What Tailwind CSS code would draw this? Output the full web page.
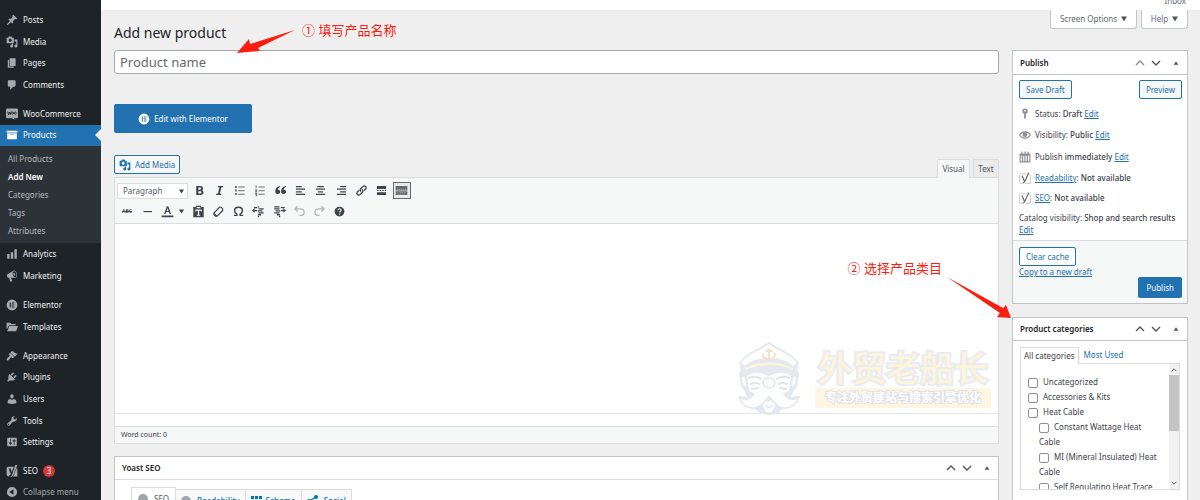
<!DOCTYPE html>
<html lang="en">
<head>
<meta charset="utf-8">
<title>Add new product</title>
<script src="https://cdn.jsdelivr.net/npm/@tailwindcss/browser@4"></script>
</head>
<body class="bg-[#efefef] text-[#3c434a] text-[8px] leading-3 font-['Noto_Sans','Noto_Sans_CJK_SC',sans-serif] overflow-hidden">
<svg class="hidden" aria-hidden="true">
  <symbol id="pin" viewBox="0 0 20 20"><path d="M10.44 3.02l1.82-1.82 6.36 6.35-1.83 1.82c-1.05-.68-2.48-.57-3.41.36l-.75.75c-.92.93-1.04 2.35-.35 3.41l-1.83 1.82-2.41-2.41-2.8 2.79c-.42.42-3.38 2.71-3.8 2.29s1.86-3.39 2.28-3.81l2.79-2.79L4.1 9.36l1.83-1.82c1.05.69 2.48.57 3.4-.36l.75-.75c.93-.92 1.05-2.35.36-3.41z"/></symbol>
  <symbol id="media" viewBox="0 0 20 20"><path fill-rule="evenodd" d="M13 11V4c0-.55-.45-1-1-1h-1.67L9 1H5L3.67 3H2c-.55 0-1 .45-1 1v7c0 .55.45 1 1 1h10c.55 0 1-.45 1-1zM7 4.5c1.38 0 2.5 1.12 2.5 2.5S8.38 9.5 7 9.5 4.5 8.38 4.5 7 5.62 4.5 7 4.5zM14 6h5v10.5c0 1.38-1.12 2.5-2.5 2.5S14 17.88 14 16.5s1.12-2.5 2.5-2.5c.17 0 .34.02.5.05V9h-3V6zm-4 8.05V13h2v3.5c0 1.38-1.12 2.5-2.5 2.5S7 17.88 7 16.5 8.12 14 9.5 14c.17 0 .34.02.5.05z"/></symbol>
  <symbol id="page" viewBox="0 0 20 20"><path d="M6 15V2h10v13H6zm-1 1h8v2H3V5h2v11z"/></symbol>
  <symbol id="comment" viewBox="0 0 20 20"><path d="M5 2h9c1.1 0 2 .9 2 2v7c0 1.1-.9 2-2 2h-2l-5 5v-5H5c-1.1 0-2-.9-2-2V4c0-1.1.9-2 2-2z"/></symbol>
  <symbol id="woo" viewBox="0 0 20 20"><path d="M2 1h16a2 2 0 0 1 2 2v12a2 2 0 0 1-2 2h-5l2 3-5-3H2a2 2 0 0 1-2-2V3a2 2 0 0 1 2-2z"/><path d="M3 6l1 5 2-4 1 4 1.500-5" fill="none" stroke="#1d2327" stroke-width="1.500"/><circle cx="11" cy="8.500" r="1.700" fill="none" stroke="#1d2327" stroke-width="1.400"/><circle cx="15.500" cy="8.500" r="1.700" fill="none" stroke="#1d2327" stroke-width="1.400"/></symbol>
  <symbol id="archive" viewBox="0 0 20 20"><path fill-rule="evenodd" d="M19 3v3H1V3h18zM2 7h16v10H2V7zm11 3V9H7v1h6z"/></symbol>
  <symbol id="bars" viewBox="0 0 20 20"><path d="M18 18V2h-4v16h4zm-6 0V7H8v11h4zm-6 0v-8H2v8h4z"/></symbol>
  <symbol id="mega" viewBox="0 0 20 20"><path fill-rule="evenodd" d="M18.15 5.94c.46 1.62.38 3.22-.02 4.48-.42 1.28-1.26 2.18-2.3 2.48-.16.06-.26.06-.4.06-.06.02-.12.02-.18.02-.06.02-.14.02-.22.02h-6.8l2.22 5.5c.02.14-.06.26-.14.34-.08.1-.24.16-.34.16H6.95c-.1 0-.26-.06-.34-.16-.08-.08-.16-.2-.14-.34l-1-5.5H4.25l-.02-.02c-.5.06-1.08-.18-1.54-.62s-.88-1.08-1.06-1.88c-.24-.8-.2-1.56-.02-2.2.18-.62.58-1.08 1.06-1.3l.02-.02 9-5.4c.1-.06.18-.1.24-.16.06-.04.14-.08.24-.12.16-.08.28-.12.5-.18 1.04-.3 2.24.1 3.22.98s1.84 2.24 2.26 3.86zm-2.58 5.98h-.02c.4-.1.74-.34 1.04-.7.58-.7.86-1.76.86-3.04 0-.64-.1-1.3-.28-1.98-.34-1.36-1.02-2.5-1.78-3.24s-1.68-1.1-2.46-.88c-.82.22-1.4.96-1.7 2-.32 1.04-.28 2.36.06 3.72.38 1.36 1 2.5 1.8 3.24.78.74 1.62 1.1 2.48.88zm-2.54-7.08c.22-.04.42-.02.62.04.38.16.76.48 1.02 1s.42 1.2.42 1.78c0 .3-.04.56-.12.8-.18.48-.44.84-.86.94-.34.1-.8-.06-1.14-.4s-.64-.86-.78-1.5c-.18-.62-.12-1.24.02-1.72s.48-.84.82-.94z"/></symbol>
  <symbol id="elementor" viewBox="0 0 20 20"><path fill-rule="evenodd" d="M10 1a9 9 0 1 0 0 18 9 9 0 0 0 0-18zM6.300 6H8v8H6.300zM9.500 6H14v1.600H9.500zM9.500 9.200H14v1.600H9.500zM9.500 12.400H14V14H9.500z"/></symbol>
  <symbol id="folder" viewBox="0 0 20 20"><path d="M1 3h6l2 2h7v2H5L2 13H1z"/><path d="M5.500 8.500H20L17 17H2z"/></symbol>
  <symbol id="brush" viewBox="0 0 20 20"><path d="M14.480 11.060L7.410 3.990l1.500-1.500c.5-.56 2.300-.47 3.510.32 1.210.8 1.430 1.280 2.910 2.100 1.180.64 2.450 1.260 4.450.85zm-.71.71L6.700 4.700 4.930 6.470c-.39.39-.39 1.020 0 1.410l1.060 1.060c.39.39.39 1.030 0 1.420-.6.6-1.430 1.110-2.210 1.690-.35.26-.7.53-1.010.84C1.430 14.230.4 16.080 1.400 17.070c.99 1 2.840-.03 4.180-1.360.31-.31.58-.66.85-1.020.57-.78 1.080-1.610 1.690-2.210.39-.39 1.020-.39 1.410 0l1.060 1.060c.39.39 1.020.39 1.410 0z"/></symbol>
  <symbol id="plug" viewBox="0 0 20 20"><path d="M13.110 4.360L9.870 7.600 8 5.730l3.240-3.240c.35-.34 1.050-.2 1.560.32.52.51.66 1.210.31 1.550zm-8 1.770l.91-1.120 9.010 9.010-1.190.84c-.71.71-2.630 1.160-3.820 1.160H6.140L4.900 17.260c-.59.59-1.540.59-2.120 0-.59-.58-.59-1.530 0-2.120l1.240-1.240v-3.880c0-1.130.4-3.190 1.090-3.890zm7.260 3.970l3.240-3.240c.34-.35 1.040-.21 1.550.31.52.51.66 1.210.31 1.550l-3.240 3.250z"/></symbol>
  <symbol id="user" viewBox="0 0 20 20"><path d="M10 9.250c-2.270 0-2.730-3.440-2.730-3.440C7 4.020 7.820 2 9.970 2c2.160 0 2.980 2.020 2.710 3.810 0 0-.41 3.440-2.680 3.440zm0 2.570L12.720 10c2.390 0 4.520 2.330 4.520 4.530v2.490s-3.650 1.130-7.240 1.130c-3.650 0-7.240-1.130-7.240-1.130v-2.490c0-2.250 1.940-4.480 4.470-4.480z"/></symbol>
  <symbol id="wrench" viewBox="0 0 20 20"><path fill-rule="evenodd" d="M16.680 9.770c-1.340 1.340-3.300 1.670-4.950.99l-5.410 6.520c-.99.99-2.590.99-3.580 0s-.99-2.590 0-3.570l6.520-5.420c-.68-1.650-.35-3.610.99-4.950 1.280-1.280 3.120-1.620 4.720-1.060l-2.890 2.890 2.820 2.820 2.860-2.870c.53 1.580.18 3.390-1.080 4.650zM3.810 16.210c.4.39 1.040.39 1.430 0 .4-.4.4-1.040 0-1.430-.39-.4-1.030-.4-1.430 0-.39.39-.39 1.030 0 1.430z"/></symbol>
  <symbol id="sliders" viewBox="0 0 20 20"><path fill-rule="evenodd" d="M18 16V4c0-.55-.45-1-1-1H3c-.55 0-1 .45-1 1v12c0 .55.45 1 1 1h14c.55 0 1-.45 1-1zM8 11h1c.55 0 1 .45 1 1s-.45 1-1 1H8v1.500c0 .28-.22.5-.5.5s-.5-.22-.5-.5V13H6c-.55 0-1-.45-1-1s.45-1 1-1h1V5.500c0-.28.22-.5.5-.5s.5.22.5.5V11zm5-2h-1c-.55 0-1-.45-1-1s.45-1 1-1h1V5.500c0-.28.22-.5.5-.5s.5.22.5.5V7h1c.55 0 1 .45 1 1s-.45 1-1 1h-1v5.500c0 .28-.22.5-.5.5s-.5-.22-.5-.5V9z"/></symbol>
  <symbol id="yoast" viewBox="0 0 20 20"><path d="M4 3h9L9.500 12 7.500 6H4.500l3.600 9c-.5 1.500-1.500 2-3 2v2H4a3 3 0 0 1-3-3V6a3 3 0 0 1 3-3z"/><path d="M15.500 0H19l-7 17c-.7 1.500-1.500 2.500-3 3H7c2-1 3-2.500 3.500-5z"/><path d="M17.500 5.500c1 .5 1.500 1.500 1.500 2.500v11h-7z"/></symbol>
  <symbol id="yoastline" viewBox="0 0 20 20"><path d="M13 3H4a3 3 0 0 0-3 3v10a3 3 0 0 0 3 3h1M17 4c1.500.5 2 1.500 2 3v12h-8" fill="none" stroke="#c3c4c7" stroke-width="1.500"/><path d="M5 6l4 9.500M16.500 1l-7 15c-.8 1.700-1.500 2.400-3.500 2.700" fill="none" stroke="#646970" stroke-width="2"/></symbol>
  <symbol id="collapse" viewBox="0 0 20 20"><path fill-rule="evenodd" d="M10 1.500a8.500 8.500 0 1 0 0 17 8.500 8.500 0 0 0 0-17zM12.500 14.500V5.500L5.500 10z"/></symbol>
  <symbol id="up" viewBox="0 0 10 10"><path d="M1 7l4-4 4 4" fill="none" stroke="currentColor" stroke-width="1.400"/></symbol>
  <symbol id="down" viewBox="0 0 10 10"><path d="M1 3l4 4 4-4" fill="none" stroke="currentColor" stroke-width="1.400"/></symbol>
  <symbol id="triup" viewBox="0 0 10 10"><path d="M1 8l4-6 4 6z"/></symbol>
  <symbol id="tridown" viewBox="0 0 10 10"><path d="M0 1h10L5 9z"/></symbol>
</svg>

<div class="flex h-screen">
  <!-- Admin menu -->
  <nav class="flex w-[101px] shrink-0 flex-col gap-[7px] overflow-hidden bg-[#1d2327] pt-[9px] text-[#f0f0f1]">
    <ul class="grid h-[87px] shrink-0 auto-rows-fr">
      <li><a href="#" class="flex h-full items-center gap-[5px] pl-[6px]"><svg class="size-3 fill-[#a7aaad]"><use href="#pin"/></svg>Posts</a></li>
      <li><a href="#" class="flex h-full items-center gap-[5px] pl-[6px]"><svg class="size-3 fill-[#a7aaad]"><use href="#media"/></svg>Media</a></li>
      <li><a href="#" class="flex h-full items-center gap-[5px] pl-[6px]"><svg class="size-3 fill-[#a7aaad]"><use href="#page"/></svg>Pages</a></li>
      <li><a href="#" class="flex h-full items-center gap-[5px] pl-[6px]"><svg class="size-3 fill-[#a7aaad]"><use href="#comment"/></svg>Comments</a></li>
    </ul>
    <div class="shrink-0">
      <ul class="grid h-[43px] auto-rows-fr">
        <li><a href="#" class="flex h-full items-center gap-[5px] pl-[6px]"><svg class="size-3 fill-[#a7aaad]"><use href="#woo"/></svg>WooCommerce</a></li>
        <li class="relative"><a href="#" class="flex h-full items-center gap-[5px] bg-[#2271b1] pl-[6px] text-white"><svg class="size-3 fill-white"><use href="#archive"/></svg>Products</a>
          <svg class="absolute top-1/2 right-0 h-3 w-[6px] -translate-y-1/2 fill-[#f0f0f1]" viewBox="0 0 6 12"><path d="M6 0v12L0 6z"/></svg></li>
      </ul>
      <ul class="bg-[#2c3338] pt-1 pb-[3px] pl-2 leading-[18px] text-[#b4b9be]">
        <li><a href="#">All Products</a></li>
        <li><a href="#" class="font-semibold text-white">Add New</a></li>
        <li><a href="#">Categories</a></li>
        <li><a href="#">Tags</a></li>
        <li><a href="#">Attributes</a></li>
      </ul>
      <ul class="grid h-11 auto-rows-fr">
        <li><a href="#" class="flex h-full items-center gap-[5px] pl-[6px]"><svg class="size-3 fill-[#a7aaad]"><use href="#bars"/></svg>Analytics</a></li>
        <li><a href="#" class="flex h-full items-center gap-[5px] pl-[6px]"><svg class="size-3 fill-[#a7aaad]"><use href="#mega"/></svg>Marketing</a></li>
      </ul>
    </div>
    <ul class="grid h-11 shrink-0 auto-rows-fr">
      <li><a href="#" class="flex h-full items-center gap-[5px] pl-[6px]"><svg class="size-3 fill-[#a7aaad]"><use href="#elementor"/></svg>Elementor</a></li>
      <li><a href="#" class="flex h-full items-center gap-[5px] pl-[6px]"><svg class="size-3 fill-[#a7aaad]"><use href="#folder"/></svg>Templates</a></li>
    </ul>
    <ul class="grid h-[108px] shrink-0 auto-rows-fr">
      <li><a href="#" class="flex h-full items-center gap-[5px] pl-[6px]"><svg class="size-3 fill-[#a7aaad]"><use href="#brush"/></svg>Appearance</a></li>
      <li><a href="#" class="flex h-full items-center gap-[5px] pl-[6px]"><svg class="size-3 fill-[#a7aaad]"><use href="#plug"/></svg>Plugins</a></li>
      <li><a href="#" class="flex h-full items-center gap-[5px] pl-[6px]"><svg class="size-3 fill-[#a7aaad]"><use href="#user"/></svg>Users</a></li>
      <li><a href="#" class="flex h-full items-center gap-[5px] pl-[6px]"><svg class="size-3 fill-[#a7aaad]"><use href="#wrench"/></svg>Tools</a></li>
      <li><a href="#" class="flex h-full items-center gap-[5px] pl-[6px]"><svg class="size-3 fill-[#a7aaad]"><use href="#sliders"/></svg>Settings</a></li>
    </ul>
    <ul class="grid h-[43px] shrink-0 auto-rows-fr">
      <li><a href="#" class="flex h-full items-center gap-[5px] pl-[6px]"><svg class="size-3 fill-[#a7aaad]"><use href="#yoast"/></svg>SEO<span class="flex size-3 items-center justify-center rounded-full bg-[#d63638] text-white">3</span></a></li>
      <li><button class="flex h-full items-center gap-[5px] pl-[6px] text-[#a7aaad]"><svg class="size-3 fill-[#a7aaad]"><use href="#collapse"/></svg>Collapse menu</button></li>
    </ul>
  </nav>

  <div class="flex min-w-0 flex-1 flex-col">
    <header class="flex h-[10px] shrink-0 items-end justify-end bg-white pr-[14px] pb-[3px] text-[#646970]">Inbox</header>
    <div class="flex min-h-0 flex-1 gap-[13px] pr-3 pl-[13px]">
      <main class="relative flex min-w-0 flex-1 flex-col">
        <h1 class="mt-[13px] text-[14px] leading-5 text-[#1d2327]">Add new product</h1>
        <input type="text" aria-label="Product name" placeholder="Product name" class="mt-[7px] h-6 w-full shrink-0 rounded-[3px] border border-[#a5a8ac] bg-white px-[5px] text-[13px] text-[#2c3338] placeholder:text-[#646970]">
        <button class="mt-[30px] flex h-[29px] w-[138px] shrink-0 items-center justify-center gap-1 rounded-[2px] bg-[#2271b1] text-white"><svg class="size-3 fill-white"><use href="#elementor"/></svg>Edit with Elementor</button>

        <div class="mt-[22px] flex shrink-0 items-start justify-between">
          <button class="flex h-[19px] items-center gap-1 rounded-[2px] border border-[#2271b1] bg-[#f6f7f7] px-1 text-[#2271b1]"><svg class="size-3 fill-[#2271b1]"><use href="#media"/></svg>Add Media</button>
          <div class="mt-1 flex gap-[3px]">
            <button class="z-10 -mb-px h-[19px] w-[33px] border border-b-0 border-[#dcdcde] bg-[#f6f7f7] text-[#50575e]">Visual</button>
            <button class="h-[18px] w-[26px] border border-b-0 border-[#dcdcde] bg-[#ebebeb] text-[#50575e]">Text</button>
          </div>
        </div>
        <section class="shrink-0 border border-[#dcdcde] bg-white">
          <div class="flex flex-col gap-1 border-b border-[#dcdcde] bg-[#f6f7f7] pt-1 pb-1 pl-[2px] fill-[#3c434a] text-[#3c434a]">
            <div class="flex items-center">
              <div class="relative mr-px w-[71px]">
                <select aria-label="Block format" class="block h-4 w-full appearance-none border border-[#dcdcde] bg-white pl-[5px] text-[#50575e]"><option>Paragraph</option></select>
                <svg class="pointer-events-none absolute top-[6px] right-1 size-[5px]"><use href="#tridown"/></svg>
              </div>
              <div class="grid w-[223px] grid-cols-11 items-center justify-items-center">
                <button aria-label="Bold"><svg class="size-[13px]" viewBox="0 0 20 20"><path fill-rule="evenodd" d="M5 3h6c3 0 4.500 1.500 4.500 3.700 0 1.500-.8 2.500-2 3 1.600.4 2.700 1.600 2.700 3.400C16.200 15.500 14.500 17 11.500 17H5zm3.200 2.500v3.200h2.300c1.200 0 1.800-.6 1.800-1.600s-.6-1.600-1.800-1.600zm0 5.500v3.500H11c1.300 0 2-.6 2-1.700S12.300 11 11 11z"/></svg></button>
                <button aria-label="Italic"><svg class="size-[13px]" viewBox="0 0 20 20"><path d="M8 3h8l-.4 2H13l-2.500 10H13l-.5 2h-8l.5-2h2.500L10 5H7.600z"/></svg></button>
                <button aria-label="Bulleted list"><svg class="size-[13px] fill-[#6b7077]" viewBox="0 0 20 20"><path d="M3 3h3v3H3zM3 8.500h3v3H3zM3 14h3v3H3zM8 4h10v1.500H8zM8 9.500h10V11H8zM8 15h10v1.500H8z"/></svg></button>
                <button aria-label="Numbered list"><svg class="size-[13px] fill-[#6b7077]" viewBox="0 0 20 20"><path d="M4 2h1.500v5H4zM3 8.500h3.500V11L5 12h1.500v1H3v-1l2-2H3zM3 14h3.500v5H3v-1h2v-1H3v-1h2v-1H3zM8.500 4H18v1.500H8.500zM8.500 9.500H18V11H8.500zM8.500 15H18v1.500H8.500z"/></svg></button>
                <button aria-label="Blockquote"><svg class="size-[13px]" viewBox="0 0 20 20"><path d="M9.500 4.500C7 5.500 6 7 6 9c2-.3 3.500 1 3.500 3s-1.500 3.500-3.700 3.500S2 13.800 2 11c0-4 2.500-7 7-8zM18.500 4.500C16 5.500 15 7 15 9c2-.3 3.500 1 3.500 3s-1.500 3.500-3.700 3.500S11 13.800 11 11c0-4 2.500-7 7-8z"/></svg></button>
                <button aria-label="Align left"><svg class="size-[13px]" viewBox="0 0 20 20"><path d="M3 3h9v2H3zM3 7h14v2H3zM3 11h9v2H3zM3 15h14v2H3z"/></svg></button>
                <button aria-label="Align center"><svg class="size-[13px]" viewBox="0 0 20 20"><path d="M5 3h10v2H5zM3 7h14v2H3zM6 11h8v2H6zM3 15h14v2H3z"/></svg></button>
                <button aria-label="Align right"><svg class="size-[13px]" viewBox="0 0 20 20"><path d="M8 3h9v2H8zM3 7h14v2H3zM8 11h9v2H8zM3 15h14v2H3z"/></svg></button>
                <button aria-label="Insert link"><svg class="size-[13px]" viewBox="0 0 20 20"><path d="M9 11.500c-1.500-1.500-1.500-3 0-4.500l3-3c1.500-1.500 3-1.500 4.200-.2 1.300 1.200 1.300 2.700-.2 4.200l-2 2M11 8.500c1.500 1.500 1.500 3 0 4.500l-3 3c-1.500 1.500-3 1.500-4.200.2-1.300-1.200-1.300-2.700.2-4.200l2-2" fill="none" stroke="currentColor" stroke-width="2"/></svg></button>
                <button aria-label="Read more"><svg class="size-[13px]" viewBox="0 0 20 20"><path d="M3 3h14v4.500H3zM3 9.200h2.500v1.600H3zM7 9.200h2.500v1.600H7zM11 9.200h2.500v1.600H11zM15 9.200h2v1.600h-2zM3 12.500h14V17H3z"/></svg></button>
                <button aria-label="Toolbar toggle" aria-pressed="true" class="flex h-[17px] w-[18px] items-center justify-center border border-[#646970] bg-[#ebebeb]"><svg class="size-[13px] fill-[#646970]" viewBox="0 0 20 20"><path d="M1 3h18v7H1zM1 11h18v6H1z"/><path d="M3 8h14M3 13h3M8 13h4M14 13h3M4 15.500h12" stroke="#c3c4c7" stroke-width="1" stroke-dasharray="2 1"/></svg></button>
              </div>
            </div>
            <div class="flex items-center">
              <div class="grid w-[60px] grid-cols-3 items-center justify-items-center">
                <button aria-label="Strikethrough" class="text-[5px] leading-4 font-semibold line-through">ABC</button>
                <button aria-label="Horizontal line"><svg class="size-[13px]" viewBox="0 0 20 20"><path d="M4 9.200h13V11H4z"/></svg></button>
                <button aria-label="Text color"><svg class="size-[13px]" viewBox="0 0 20 20"><path fill-rule="evenodd" d="M9 2h2.200l4.300 12h-2.200l-1.100-3.200H8L6.800 14H4.700zm1 2.600L8.600 9.100h3zM1 16h18v3H1z"/></svg></button>
              </div>
              <button aria-label="Text color options" class="mr-[3px] flex w-2 justify-center"><svg class="size-[5px]"><use href="#tridown"/></svg></button>
              <div class="grid w-[162px] grid-cols-8 items-center justify-items-center">
                <button aria-label="Paste as text"><svg class="size-[13px]" viewBox="0 0 20 20"><path fill-rule="evenodd" d="M2 3h4V1h8v2h4v16H2zM7 3v2h6V3zM5 7v3h1.500V9H9v6H7.500v1.500h5V15H11V9h2.500v1H15V7z"/></svg></button>
                <button aria-label="Clear formatting"><svg class="size-[13px]" viewBox="0 0 20 20"><path d="M3 12.500L11.500 3.500q1.500-1 3 .5l1.500 1.500q1.500 1.500.3 3L8 17H5.500L3 14.500z" fill="none" stroke="currentColor" stroke-width="1.800"/><path d="M3 12l5 5H5l-3-3z"/></svg></button>
                <button aria-label="Special character"><svg class="size-[13px]" viewBox="0 0 20 20"><path d="M3 16h4.500v-2C5 12.500 4 11 4 8.800 4 5.500 6.500 3.500 10 3.500s6 2 6 5.300c0 2.200-1 3.700-3.500 5.200v2H17" fill="none" stroke="currentColor" stroke-width="2.200"/></svg></button>
                <button aria-label="Decrease indent"><svg class="size-[13px]" viewBox="0 0 20 20"><path d="M9 2h2v2H9zM3 3h5v2H3zM10 5h8v2h-8zM9 8h7v2H9zM10 11h8v2h-8zM9 14h5v2H9zM0 8.500L4 5v2.500h4v2H4V12zM9 17h2v2H9z"/></svg></button>
                <button aria-label="Increase indent"><svg class="size-[13px]" viewBox="0 0 20 20"><path d="M2 2h8v2H2zM2 5h8v2H2zM4 8h7v2H4zM2 11h8v2H2zM6 14h5v2H6zM9 17h2v2H9zM12 3h6v2h-6zM20 8.500L16 5v2.500h-4v2h4V12z"/></svg></button>
                <button aria-label="Undo" disabled class="text-[#b4b5b8]"><svg class="size-[13px]" viewBox="0 0 20 20"><path d="M7 2L3 6l4 4M3 6h8c3.500 0 6 2 6 5s-2.500 5-6 5h-1" fill="none" stroke="currentColor" stroke-width="2"/></svg></button>
                <button aria-label="Redo" disabled class="text-[#b4b5b8]"><svg class="size-[13px]" viewBox="0 0 20 20"><path d="M13 2l4 4-4 4M17 6H9c-3.500 0-6 2-6 5s2.500 5 6 5h1" fill="none" stroke="currentColor" stroke-width="2"/></svg></button>
                <button aria-label="Keyboard shortcuts"><svg class="size-[13px]" viewBox="0 0 20 20"><circle cx="10" cy="10" r="7.500"/><path d="M7.700 8c0-3 4.800-2.800 4.800 0 0 1.700-2.300 1.700-2.300 3.500M10.200 13v2" fill="none" stroke="#f6f7f7" stroke-width="1.700"/></svg></button>
              </div>
            </div>
          </div>
          <textarea aria-label="Product description" class="block h-[190px] w-full resize-none border-b border-[#e5e5e5] bg-white outline-none"></textarea>
          <div class="mt-3 h-[17px] border-t border-[#dcdcde] bg-[#f6f7f7] pl-[6px] text-[7px] leading-4">Word count: 0</div>
        </section>

        <section class="mt-3 min-h-0 flex-1 border border-b-0 border-[#c3c4c7] bg-white">
          <header class="flex h-[23px] items-center border-b border-[#dcdcde] pr-2 pl-[7px] text-[#50575e]">
            <h2 class="flex-1 text-[8px] font-semibold text-[#1d2327]">Yoast SEO</h2>
            <button aria-label="Move up"><svg class="mr-[6px] size-[10px]"><use href="#up"/></svg></button>
            <button aria-label="Move down"><svg class="mr-3 size-[10px]"><use href="#down"/></svg></button>
            <button aria-label="Toggle panel"><svg class="size-[6px] fill-[#50575e]"><use href="#triup"/></svg></button>
          </header>
          <div class="mt-[7px] flex items-start pl-4 font-medium text-[#0075b3]">
            <button class="flex h-6 items-center gap-[6px] border border-[#dcdcde] px-[6px] font-normal text-[#50575e]"><span class="size-[10px] rounded-full bg-[#a0a5aa]"></span>SEO</button>
            <button class="mt-[2px] flex h-[22px] items-center gap-[6px] border-t border-r border-[#dcdcde] bg-[#f8f8f8] px-[5px]"><span class="size-[10px] rounded-full bg-[#a0a5aa]"></span>Readability</button>
            <button class="mt-[2px] flex h-[22px] items-center gap-1 border-t border-r border-[#dcdcde] bg-[#f8f8f8] px-[5px]"><svg class="size-[11px] fill-[#0075b3]" viewBox="0 0 11 11"><path d="M0 1h3v3H0zM4 1h3v3H4zM8 1h3v3H8zM0 5h3v3H0zM4 5h3v3H4zM8 5h3v3H8zM0 9h3v2H0zM4 9h3v2H4zM8 9h3v2H8z"/></svg>Schema</button>
            <button class="mt-[2px] flex h-[22px] items-center gap-[6px] border-t border-r border-[#dcdcde] bg-[#f8f8f8] px-[5px]"><svg class="size-[11px] fill-[#0075b3]" viewBox="0 0 11 11"><path d="M2 6l7-4M2 6l7 4" stroke="#0075b3" stroke-width="1.200"/><circle cx="2" cy="6" r="2"/><circle cx="9" cy="2" r="2"/><circle cx="9" cy="9.500" r="1.800"/></svg>Social</button>
          </div>
        </section>

        <!-- Watermark -->
        <div class="pointer-events-none absolute top-[331px] right-2 flex items-start gap-3">
          <svg class="h-[76px] w-[66px]" viewBox="0 0 66 76" stroke-linejoin="round" stroke-linecap="round">
            <path d="M32 2C23 9 11 11 3 22l2 7-2 4 2 12 3 4 4 8-10-1c3 8 9 12 17 11l5 5 8 1 8-1 5-5c8 1 14-3 17-11l-10 1 4-8 3-4 2-12-2-4 2-7C53 11 41 9 32 2z" fill="#e4e9ef" stroke="#e4e9ef" stroke-width="2"/>
            <path d="M4 22C12 12 23 10 32 3c9 7 20 9 28 19l-4 3c-4-5-13-8-24-8S12 20 8 25z" fill="#fdfdfd"/>
            <path d="M9 28c13-7 33-7 46 0" fill="none" stroke="#fdf3d8" stroke-width="2.500"/>
            <path d="M32 8v10M29 10h6M26 13c0 7 12 7 12 0" fill="none" stroke="#eee3c8" stroke-width="1.800"/>
            <path d="M10 35c4-3 9-4 14-3l8 3 8-3c5-1 10 0 14 3l-2 15-8 3-12-4-12 4-8-3z" fill="#fdfdfd"/>
            <path d="M12 37q6-3 12 1M52 37q-6-3-12 1M14 43q5-2 8 0M50 43q-5-2-8 0M15 48l6-1M49 48l-6-1" fill="none" stroke="#dfe5ec" stroke-width="2"/>
            <ellipse cx="32" cy="42" rx="6" ry="5" fill="#fdfdfd" stroke="#dfe5ec" stroke-width="1.500"/>
            <path d="M5 35l3 2 1 9-3-3zM59 35l-3 2-1 9 3-3z" fill="#fdfdfd"/>
            <path d="M32 49c-5-4-11-3-14 3-3 6-8 9-14 6 3 9 15 11 21 4l7-8 7 8c6 7 18 5 21-4-6 3-11 0-14-6-3-6-9-7-14-3z" fill="#fdfdfd"/>
            <path d="M26 65c0-4 4-6 6-4 2-2 6 0 6 4l-3 6h-6z" fill="#fdfdfd"/>
            <path d="M29 65q3 3 6 0" fill="none" stroke="#dfe5ec" stroke-width="1.500"/>
          </svg>
          <div class="mt-[7px]">
            <div class="text-center text-[34px] leading-10 font-medium text-[#fdf4dc] [-webkit-text-stroke:4px_#e9ecf2] [paint-order:stroke_fill]">外贸老船长</div>
            <div class="h-5 w-[176px] bg-[#fef6e2] text-center text-[12px] leading-5 font-bold text-white [-webkit-text-stroke:2px_#dfe1e6] [paint-order:stroke_fill]">专注外贸建站与搜索引擎优化</div>
          </div>
        </div>

        <!-- Annotations -->
        <p class="absolute top-[10px] left-[188px] text-[13px] leading-5 text-[#fb1d0f]">① 填写产品名称</p>
        <svg class="absolute top-[19px] left-[122px] h-6 w-[60px] fill-[#fb1d0f]" viewBox="0 0 60 24"><path d="M59 1L22 19l2 3L1 24l12-14 1 5z"/></svg>
        <p class="absolute top-[248px] right-[57px] text-[13px] leading-5 text-[#fb1d0f]">② 选择产品类目</p>
        <svg class="absolute top-[267px] right-[-13px] h-[42px] w-[66px] fill-[#fb1d0f]" viewBox="0 0 66 42"><path d="M1 0l56 31 3-3 5 13-14-1 3-4z"/></svg>
      </main>

      <aside class="flex w-[176px] shrink-0 flex-col">
        <div class="-ml-5 flex justify-end gap-1 text-[#646970]">
          <button class="flex h-[19px] w-[87px] items-center justify-center gap-1 rounded-b-[3px] border border-t-0 border-[#c3c4c7] bg-white">Screen Options<svg class="size-[6px] fill-[#50575e]"><use href="#tridown"/></svg></button>
          <button class="flex h-[19px] w-[47px] items-center justify-center gap-1 rounded-b-[3px] border border-t-0 border-[#c3c4c7] bg-white">Help<svg class="size-[6px] fill-[#50575e]"><use href="#tridown"/></svg></button>
        </div>
        <section class="mt-[21px] shrink-0 border border-[#c3c4c7] bg-white">
          <header class="flex h-6 items-center border-b border-[#c3c4c7] pr-2 pl-[7px] text-[#50575e]">
            <h2 class="flex-1 text-[8px] font-semibold text-[#1d2327]">Publish</h2>
            <button aria-label="Move up" class="text-[#8c8f94]"><svg class="mr-[6px] size-[10px]"><use href="#up"/></svg></button>
            <button aria-label="Move down"><svg class="mr-3 size-[10px]"><use href="#down"/></svg></button>
            <button aria-label="Toggle panel"><svg class="size-[6px] fill-[#50575e]"><use href="#triup"/></svg></button>
          </header>
          <div class="flex justify-between pt-[5px] pr-[5px] pl-[6px] text-[#2271b1]">
            <button class="h-[19px] rounded-[2px] border border-[#2271b1] bg-[#f6f7f7] px-[6px]">Save Draft</button>
            <button class="h-[19px] rounded-[2px] border border-[#2271b1] bg-[#f6f7f7] px-[6px]">Preview</button>
          </div>
          <ul class="mt-1 px-[6px]">
            <li class="flex h-[21px] items-center gap-1"><svg class="size-3 fill-[#8c8f94]" viewBox="0 0 20 20"><path fill-rule="evenodd" d="M10 1a4.500 4.500 0 0 1 1.500 8.800V16L10 19l-1.500-3V9.800A4.500 4.500 0 0 1 10 1zm0 2a1.500 1.500 0 1 0 0 3 1.500 1.500 0 0 0 0-3z"/></svg><span>Status: <b class="font-medium">Draft</b> <a href="#" class="text-[#2271b1] underline">Edit</a></span></li>
            <li class="flex h-[22px] items-center gap-1"><svg class="size-3 fill-[#8c8f94]" viewBox="0 0 20 20"><path d="M1 10c4-7 14-7 18 0-4 7-14 7-18 0z" fill="none" stroke="#8c8f94" stroke-width="1.800"/><circle cx="10" cy="9.500" r="4"/></svg><span>Visibility: <b class="font-medium">Public</b> <a href="#" class="text-[#2271b1] underline">Edit</a></span></li>
            <li class="flex h-[21px] items-center gap-1"><svg class="size-3 fill-[#8c8f94]" viewBox="0 0 20 20"><path fill-rule="evenodd" d="M1 4h3V1h2v3h3V1h2v3h3V1h2v3h3v15H1zM3 8v2h2V8zM7 8v9h2V8zM11 8v9h2V8zM15 8v9h2V8zM3 11v6h2v-6z"/></svg><span>Publish <b class="font-medium">immediately</b> <a href="#" class="text-[#2271b1] underline">Edit</a></span></li>
            <li class="flex h-[21px] items-center gap-1"><svg class="size-3"><use href="#yoastline"/></svg><span><a href="#" class="text-[#2271b1] underline">Readability</a>: <b class="font-medium">Not available</b></span></li>
            <li class="flex h-5 items-center gap-1"><svg class="size-3"><use href="#yoastline"/></svg><span><a href="#" class="text-[#2271b1] underline">SEO</a>: <b class="font-medium">Not available</b></span></li>
          </ul>
          <p class="mt-1 mb-1 px-[6px] leading-3">Catalog visibility: <b class="font-medium">Shop and search results</b> <a href="#" class="text-[#2271b1] underline">Edit</a></p>
          <footer class="flex flex-col items-start border-t border-[#dcdcde] bg-[#f6f7f7] pt-[6px] pr-[5px] pb-[5px] pl-[6px]">
            <button class="h-[19px] rounded-[2px] border border-[#2271b1] bg-white px-[6px] text-[#2271b1]">Clear cache</button>
            <a href="#" class="leading-[11px] text-[#2271b1] underline">Copy to a new draft</a>
            <button class="h-[21px] self-end rounded-[2px] bg-[#2271b1] px-2 text-white">Publish</button>
          </footer>
        </section>

        <section class="mt-[13px] flex min-h-0 flex-1 flex-col border border-b-0 border-[#c3c4c7] bg-white">
          <header class="flex h-[23px] shrink-0 items-center border-b border-[#c3c4c7] pr-2 pl-[7px] text-[#50575e]">
            <h2 class="flex-1 text-[8px] font-semibold text-[#1d2327]">Product categories</h2>
            <button aria-label="Move up"><svg class="mr-[6px] size-[10px]"><use href="#up"/></svg></button>
            <button aria-label="Move down"><svg class="mr-3 size-[10px]"><use href="#down"/></svg></button>
            <button aria-label="Toggle panel"><svg class="size-[6px] fill-[#50575e]"><use href="#triup"/></svg></button>
          </header>
          <div class="mt-[6px] flex px-[7px]">
            <button class="z-10 -mb-px h-[17px] border border-b-0 border-[#dcdcde] bg-white px-[3px]">All categories</button>
            <button class="h-4 px-[5px] text-[#2271b1]">Most Used</button>
          </div>
          <div class="mx-[7px] flex h-[127px] shrink-0 overflow-hidden border border-[#dcdcde]">
            <ul class="min-w-0 flex-1 pt-[10px] pr-2 pl-[7px] leading-[15px]">
              <li><label><input type="checkbox" class="mr-[5px] inline-block size-[10px] appearance-none rounded-[2px] border border-[#8c8f94] bg-white align-middle">Uncategorized</label></li>
              <li><label><input type="checkbox" class="mr-[5px] inline-block size-[10px] appearance-none rounded-[2px] border border-[#8c8f94] bg-white align-middle">Accessories &amp; Kits</label></li>
              <li><label><input type="checkbox" class="mr-[5px] inline-block size-[10px] appearance-none rounded-[2px] border border-[#8c8f94] bg-white align-middle">Heat Cable</label>
                <ul class="pl-[11px]">
                  <li><label><input type="checkbox" class="mr-[5px] inline-block size-[10px] appearance-none rounded-[2px] border border-[#8c8f94] bg-white align-middle">Constant Wattage Heat Cable</label></li>
                  <li><label><input type="checkbox" class="mr-[5px] inline-block size-[10px] appearance-none rounded-[2px] border border-[#8c8f94] bg-white align-middle">MI (Mineral Insulated) Heat Cable</label></li>
                  <li><label><input type="checkbox" class="mr-[5px] inline-block size-[10px] appearance-none rounded-[2px] border border-[#8c8f94] bg-white align-middle">Self Regulating Heat Trace</label></li>
                </ul></li>
            </ul>
            <div class="flex w-[10px] shrink-0 flex-col items-center justify-between bg-[#f1f1f1] py-[3px] text-[#3c434a]">
              <svg class="size-[6px]"><use href="#up"/></svg>
              <div class="mt-[2px] mb-auto h-14 w-full bg-[#c4c4c4]"></div>
              <svg class="size-[6px]"><use href="#down"/></svg>
            </div>
          </div>
        </section>
      </aside>
    </div>
  </div>
</div>
</body>
</html>
